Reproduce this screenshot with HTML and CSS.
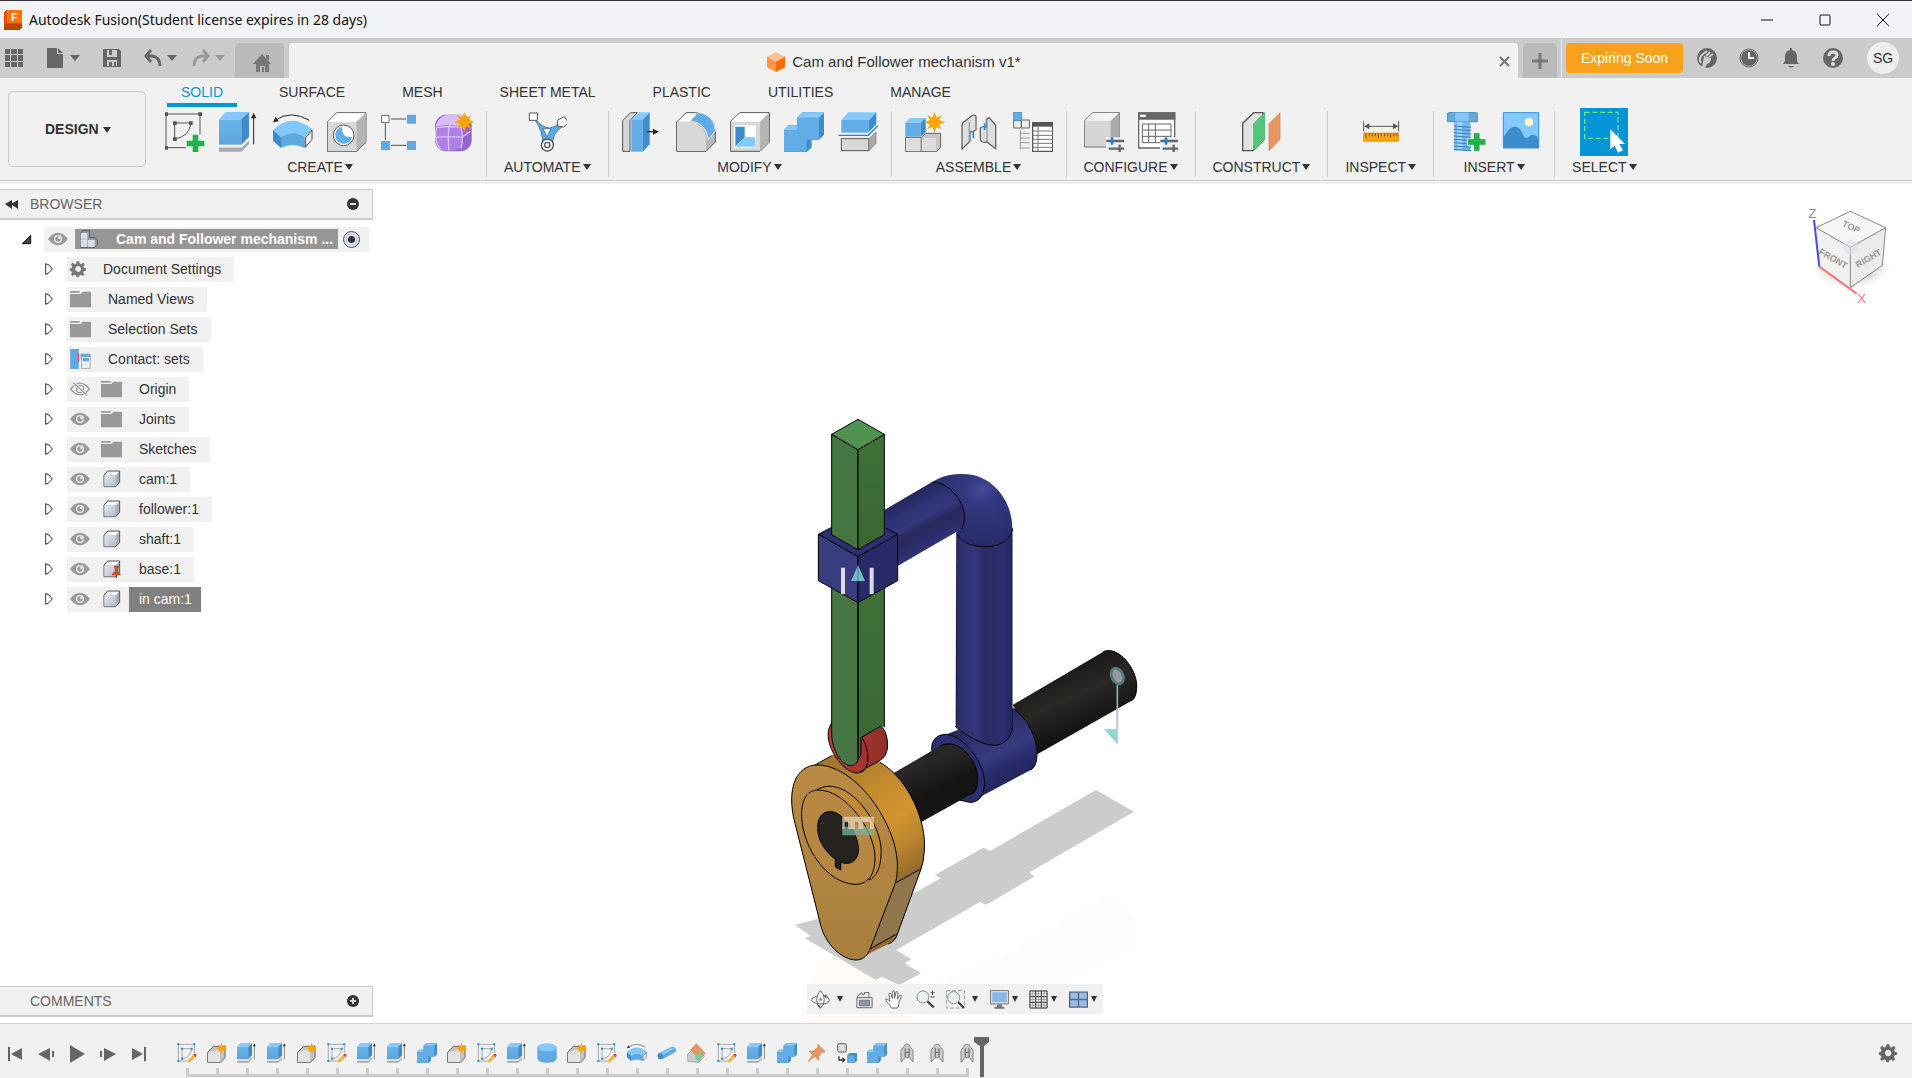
FILE: index.html
```html
<!DOCTYPE html>
<html lang="en">
<head>
    <meta charset="UTF-8">
    <meta name="viewport" content="width=device-width, initial-scale=1.0">
    <title>Autodesk Fusion</title>
    <link rel="stylesheet" href="styles.css">
</head>
<body>
    <!-- icon sprite -->
    <svg class="sprite" aria-hidden="true">
        <defs>
            <linearGradient id="blueFace" x1="0" y1="0" x2="0" y2="1"><stop offset="0" stop-color="#6ab3ea"/><stop offset="1" stop-color="#5da5dd"/></linearGradient>
            <linearGradient id="steel" x1="0" y1="0" x2="1" y2="1"><stop offset="0" stop-color="#e4e8f2"/><stop offset="1" stop-color="#b4bac8"/></linearGradient>
        </defs>
        <symbol id="star" viewBox="0 0 60 60"><path d="M30 0l6 17 15-9-8 15 17 7-17 6 8 15-15-8-6 17-7-17-15 8 8-15-16-6 16-7-8-15 15 9z" fill="#ffa500"/></symbol>
        <symbol id="sketch" viewBox="0 0 120 120">
            <path d="M105 68V6H3v101h60M29 81V33h48q-2 40-48 48z" fill="none" stroke="#555" stroke-width="3"/>
            <path d="M-2 1h11v11H-2zM100 1h11v11h-11zM-2 102h11v11H-2zM24 28h11v11H24zM72 28h11v11H72zM24 76h11v11H24z" fill="#555"/>
            <path d="M83 68h17v18h18v17h-18v18H83v-18H65V86h18z" fill="#22b14c"/>
        </symbol>
        <symbol id="extrude" viewBox="0 0 120 120">
            <path d="M0 105h67l23-23v14l-23 23H0z" fill="#aaa"/>
            <path d="M0 22h67v76H0z" fill="url(#blueFace)"/>
            <path d="M0 22L21 0h69L67 22z" fill="#84c8fc"/>
            <path d="M67 22L90 0v75L67 98z" fill="#3d8ccb"/>
            <path d="M0 104h67l23-22" fill="none" stroke="#f1f1f1" stroke-width="5"/>
            <path d="M104 97V14" stroke="#222" stroke-width="3"/><path d="M104 2l8 17H96z" fill="#222"/>
        </symbol>
        <symbol id="sweep" viewBox="0 0 120 120">
            <path d="M8 24Q55-7 109 25" fill="none" stroke="#222" stroke-width="3"/><path d="M0 31l8-17 9 14z" fill="#222"/>
            <path d="M0 54Q56 0 118 52L95 76Q60 50 24 76z" fill="#80c7fc"/>
            <path d="M0 54l24 22v32L0 86z" fill="#3d8ccb"/>
            <path d="M24 76q36-26 71 0v32q-36-18-71 0z" fill="#5da9e2"/>
            <path d="M97 78l20-24v28l-20 24z" fill="#fff" stroke="#444" stroke-width="3"/>
        </symbol>
        <symbol id="hole" viewBox="0 0 120 120">
            <path d="M1 30L29 2h88v88l-29 29H1z" fill="#d8d8d8" stroke="#666" stroke-width="3"/>
            <path d="M3 30L30 4h85L88 30z" fill="#fff"/><path d="M88 30l28-27v87l-28 28z" fill="#b5b5b5"/>
            <circle cx="50" cy="70" r="31" fill="#fff" stroke="#555" stroke-width="3"/>
            <path d="M44 44a26 26 0 1 0 32 31q-32 4-32-31z" fill="#63afe9"/>
        </symbol>
        <symbol id="pattern" viewBox="0 0 120 120">
            <path d="M30 21h46M13 34v50M30 100h46" stroke="#555" stroke-width="3"/>
            <path d="M2 10h22v22H2z" fill="#fff" stroke="#666" stroke-width="3"/>
            <path d="M78 8h27v27H78zM0 87h27v27H0zM78 87h27v27H78z" fill="#5faae3"/>
        </symbol>
        <symbol id="form" viewBox="0 0 120 120">
            <rect y="8" width="110" height="110" rx="34" fill="#9465cf"/>
            <path d="M2 44Q8 12 38 8h54q-2 22-18 34-40-5-72 2z" fill="#d9bdf7"/>
            <path d="M4 46q36-6 74 0 6 32-1 62-28 12-60 5Q-4 92 4 46z" fill="#ad80ea"/>
            <path d="M4 76q42-4 76 0l26-18M42 44q-4 36 0 72M42 44l20-34M4 46q40-5 74 0 8 34 0 64M78 46l24-20M4 46Q-4 92 17 111" fill="none" stroke="#dcc3f8" stroke-width="4"/>
            <use href="#star" x="58" width="60" height="60"/>
        </symbol>
        <symbol id="automate" viewBox="0 0 120 120">
            <path d="M22 20q25 28 46 28 18 0 30-18l8 14q-33 20-28 56H46Q52 62 22 20z" fill="#5faae3" stroke="#3f7cab" stroke-width="3"/>
            <path d="M48 50h24l-12 25z" fill="#fff" stroke="#3f7cab" stroke-width="3"/>
            <path d="M7 3h24v22H7zM92 24l20-10 12 18-14 13-18-3z" fill="#fff" stroke="#555" stroke-width="3"/>
            <circle cx="61" cy="99" r="18" fill="#fff" stroke="#555" stroke-width="4"/><circle cx="61" cy="99" r="8" fill="none" stroke="#555" stroke-width="4"/>
        </symbol>
        <symbol id="presspull" viewBox="0 0 120 120">
            <path d="M2 118V26L26 2h20L24 26v92z" fill="#d5d5d5" stroke="#555" stroke-width="3"/>
            <path d="M28 24L52 1h31L62 24z" fill="#84c8fc"/><path d="M28 24h34v95H28z" fill="#62ade6"/><path d="M62 24L83 1v96l-21 22z" fill="#3d8ccb"/>
            <path d="M74 59h24" stroke="#222" stroke-width="4"/><path d="M111 59L93 50v18z" fill="#222"/>
        </symbol>
        <symbol id="fillet" viewBox="0 0 120 120">
            <path d="M2 118V30L30 2h28q60 4 60 56v32l-28 28z" fill="#b9b9b9" stroke="#555" stroke-width="3"/>
            <path d="M3 30h40q46 8 47 54v33H3z" fill="#d8d8d8"/><path d="M4 29L31 4h30L42 29z" fill="#fff"/>
            <path d="M42 26L68 1q48 8 50 56L96 82Q92 34 42 26z" fill="#60aae5" stroke="#f1f1f1" stroke-width="3"/>
        </symbol>
        <symbol id="shell" viewBox="0 0 120 120">
            <path d="M1 30L29 2h89v88l-28 28H1z" fill="#d8d8d8" stroke="#555" stroke-width="3"/>
            <path d="M3 29L30 4h85L90 29z" fill="#fff"/><path d="M90 30l27-27v87l-27 27z" fill="#b5b5b5"/>
            <path d="M12 40h66v67H12z" fill="#fff"/><path d="M16 44h28v33L16 103z" fill="#3d8ccb"/><path d="M16 104l28-28h32v28z" fill="#84c8fc"/>
        </symbol>
        <symbol id="combine" viewBox="0 0 120 120">
            <path d="M0 54l13-14h26V17L55 1h66v66L105 83H83v23l-15 14H0z" fill="#3d8ccb"/>
            <path d="M0 54h39V17h66v66H68v36H0z" fill="#63ade7"/>
            <path d="M0 54l13-14h26v14zM39 17L55 1h66l-16 16z" fill="#84c8fc"/>
        </symbol>
        <symbol id="split" viewBox="0 0 120 120">
            <path d="M10 24L31 1h84L93 24z" fill="#84c8fc"/><path d="M10 24h83v38H10z" fill="#62ade6"/><path d="M93 24l22-23v36L93 62z" fill="#3d8ccb"/>
            <path d="M10 80h83v36H10z" fill="#d8d8d8" stroke="#555" stroke-width="3"/><path d="M93 80l21-20v34l-21 22z" fill="#aaa" stroke="#777" stroke-width="2"/>
            <path d="M0 70h91l29-29" fill="none" stroke="#f1f1f1" stroke-width="12"/><path d="M1 70h90l29-29" fill="none" stroke="#1088e0" stroke-width="4"/>
        </symbol>
        <symbol id="newcomp" viewBox="0 0 120 120">
            <path d="M1 76h48v43H1z" fill="#ddd" stroke="#666" stroke-width="3"/><path d="M49 76l13-12h45v42l-13 13H49z" fill="#c5c5c5" stroke="#666" stroke-width="3"/><path d="M50 78h43v39H50z" fill="#ddd"/>
            <path d="M1 32h46v42H1z" fill="#62ade6"/><path d="M1 32l14-14h47L47 32z" fill="#84c8fc"/><path d="M47 32l15-14v42L47 74z" fill="#3d8ccb"/>
            <use href="#star" x="58" width="62" height="62"/>
        </symbol>
        <symbol id="joint" viewBox="0 0 120 120">
            <path d="M9 38q2-8 12-13l16-13q10-6 14 2v40q-10 6-18 6v28L9 111zM82 22l8-5 20 22v71L84 90q-18 4-20-8V48q8-7 18-2z" fill="#ddd" stroke="#666" stroke-width="4"/>
            <path d="M31 30v56M51 18v36M84 22v66" stroke="#999" stroke-width="4"/>
            <path d="M43 58v20M77 34v20" stroke="#1b8de0" stroke-width="5"/>
        </symbol>
        <symbol id="assemblytable" viewBox="0 0 120 120">
            <path d="M2 24h23v24H2zM25 24h24v24H25z" fill="#eee" stroke="#666" stroke-width="3"/><path d="M1 1h25v25H1z" fill="#62ade6" stroke="#3f7cab" stroke-width="2"/>
            <path d="M22 53v60M22 64h28M22 78h28M22 92h28M22 108h28" stroke="#999" stroke-width="3"/>
            <path d="M59 32h60v86H59z" fill="#fff" stroke="#555" stroke-width="4"/><path d="M58 30h63v14H58z" fill="#555"/>
            <path d="M59 57h60M59 70h60M59 82h60M59 94h60M59 106h60M75 45v73" stroke="#777" stroke-width="3"/>
        </symbol>
        <symbol id="configure" viewBox="0 0 120 120">
            <path d="M1 27L27 1h79v78l-26 26H1z" fill="#d6d6d6" stroke="#777" stroke-width="3"/><path d="M3 26L28 3h76L80 26z" fill="#f2f2f2"/><path d="M80 27l26-25v77l-26 25z" fill="#aaa"/>
            <use href="#sliders"/>
        </symbol>
        <symbol id="sliders" viewBox="0 0 120 120">
            <path d="M66 76h54v44H66z" fill="#f1f1f1"/><path d="M67 87h53M74 110h46" stroke="#666" stroke-width="7"/><path d="M84 76v22" stroke="#1088e0" stroke-width="8"/><path d="M107 98v22" stroke="#666" stroke-width="7"/>
        </symbol>
        <symbol id="configtable" viewBox="0 0 120 120">
            <path d="M2 3h108v105H2z" fill="#fff" stroke="#666" stroke-width="4"/><path d="M1 1h111v22H1z" fill="#666"/><path d="M6 8h18v7H6z" fill="#fff"/>
            <path d="M13 36h86v56H13zM13 54h86M13 73h86M32 36v56M52 36v56" fill="none" stroke="#666" stroke-width="3"/><use href="#sliders"/>
        </symbol>
        <symbol id="construct" viewBox="0 0 120 120">
            <path d="M5 34L38 2h28v84l-30 30H5z" fill="#e2e2e2" stroke="#555" stroke-width="4"/>
            <path d="M38 35L71 2v80l-33 34z" fill="#55c57c" stroke="#35a65d" stroke-width="2"/><path d="M84 35l33-33v80l-33 34z" fill="#e9955f" stroke="#cf7b45" stroke-width="2"/>
        </symbol>
        <symbol id="measure" viewBox="0 0 120 120">
            <path d="M8 28v30M113 28v30M12 43h97" stroke="#555" stroke-width="3"/><path d="M9 43l16-9v18zM112 43l-16-9v18z" fill="#555"/>
            <path d="M8 63h105v25H8z" fill="#ffa500" stroke="#c98a10" stroke-width="2"/><path d="M15 64v13M25 64v9M34 64v9M43 64v9M52 64v13M61 64v9M71 64v9M80 64v9M89 64v13M99 64v9M108 64v9" stroke="#555" stroke-width="3"/>
        </symbol>
        <symbol id="bolt" viewBox="0 0 120 120">
            <path d="M1 4L12 0h70l9 4v25H1z" fill="#63a9dc" stroke="#2d74a8" stroke-width="2"/><path d="M25 2h40v26H25z" fill="#84c8fc"/><path d="M22 30h48v86H22z" fill="#72b8ee"/>
            <path d="M30 30h16v86H30z" fill="#9ad2fc"/><path d="M20 42l52 4M20 52l52 4M20 62l52 4M20 72l52 4M20 82l52 4M20 92l52 4M20 102l52 4M20 112l52 4" stroke="#3a80b3" stroke-width="3"/>
            <path d="M79 62h20v18h18v20H99v18H79v-18H61V80h18z" fill="#22b14c" stroke="#f1f1f1" stroke-width="3"/>
        </symbol>
        <symbol id="picture" viewBox="0 0 120 120">
            <path d="M7 2h106v106H7z" fill="#82c9fd" stroke="#3d8ccb" stroke-width="3"/><path d="M8 75Q40 20 64 62q8 22 18 14 16-18 31 4v28H8z" fill="#3d8ccb"/><circle cx="84" cy="30" r="13" fill="#fffbd0"/>
        </symbol>
        <symbol id="select" viewBox="0 0 144 144">
            <path d="M14 13h100v78H14z" fill="none" stroke="#6be38c" stroke-width="4" stroke-dasharray="15 8"/><path d="M91 64v60l13-11 10 21 15-7-11-19h17z" fill="#fff"/>
        </symbol>
        <!-- timeline icons -->
        <symbol id="t-sketch" viewBox="0 0 60 60">
            <path d="M52 30V4H4v50h30M15 48V17h29q-2 26-29 31z" fill="none" stroke="#888" stroke-width="2"/>
            <path d="M1 1h6v6H1zM49 1h6v6h-6zM1 51h6v6H1zM12 14h6v6h-6zM41 14h6v6h-6zM12 44h6v6h-6z" fill="#1b8de8"/>
            <path d="M34 50l14-14 7 7-15 14-8 2z" fill="#f2b43c"/><path d="M48 36l4-4q7-1 7 6l-4 5z" fill="#f03a4e"/>
        </symbol>
        <symbol id="t-body" viewBox="0 0 60 60">
            <path d="M2 58V28L20 10h34v34L40 58z" fill="#c4c4c4" stroke="#666" stroke-width="3"/><path d="M3 57V30l17-8h16l3 8v27z" fill="#e2e2e2"/><use href="#star" x="28" width="32" height="32"/>
        </symbol>
        <symbol id="t-cylinder" viewBox="0 0 60 60"><path d="M1 13v34q4 12 29 12t29-12V13z" fill="#5faae3"/><ellipse cx="30" cy="13" rx="29" ry="12" fill="#84c8fc"/></symbol>
        <symbol id="t-pipe" viewBox="0 0 60 60"><path d="M6 30L44 11q14-1 13 12-1 4-5 6L16 49Q2 48 2 36q1-4 4-6z" fill="#5faae3"/><path d="M10 31l34-18 8 4-34 18z" fill="#84c8fc"/><ellipse cx="10" cy="40" rx="8" ry="9" fill="#3d8ccb"/></symbol>
        <symbol id="t-plane" viewBox="0 0 60 60"><path d="M2 56V34L20 16h14l18 24-16 18z" fill="#ccc" stroke="#999" stroke-width="2"/><path d="M10 20L28 1l28 30-19 19z" fill="#e29662"/><path d="M23 44l20-22v28l-7 8z" fill="#7bcf94"/></symbol>
        <symbol id="t-pin" viewBox="0 0 60 60"><path d="M32 4l23 22-10 2-10 12v12L23 40 3 57l14-22L6 25l14-1 13-11z" fill="#e29662" stroke="#c97d48" stroke-width="2"/></symbol>
        <symbol id="t-move" viewBox="0 0 60 60"><rect x="2" y="2" width="26" height="25" rx="5" fill="#ddd" stroke="#555" stroke-width="3"/><path d="M31 37l7-7h22v22l-7 7H31z" fill="#3d8ccb"/><path d="M31 37h22v22H31z" fill="#63ade7"/><path d="M6 40v11h10" fill="none" stroke="#333" stroke-width="4"/><path d="M16 43l10 8-10 8z" fill="#333"/></symbol>
        <symbol id="t-joint" viewBox="0 0 60 60"><path d="M12 57V22L26 4h8l14 18v35L37 44H24z" fill="#ccc" stroke="#888" stroke-width="3"/><path d="M25 16v26M36 16v26M25 28h11" stroke="#777" stroke-width="4"/></symbol>
        <!-- browser icons -->
        <symbol id="eye" viewBox="0 0 60 40"><path d="M0 20Q30-18 60 20 30 58 0 20z" fill="#999"/><circle cx="30" cy="20" r="12" fill="#f1f1f1"/><circle cx="30" cy="20" r="8" fill="#999"/><circle cx="33" cy="17" r="3" fill="#fff"/></symbol>
        <symbol id="eyeoff" viewBox="0 0 60 40"><path d="M2 20Q30-15 58 20 30 55 2 20z" fill="none" stroke="#999" stroke-width="4"/><circle cx="30" cy="20" r="11" fill="none" stroke="#999" stroke-width="4"/><path d="M10 1l41 38" stroke="#f1f1f1" stroke-width="8"/><path d="M10 1l41 38" stroke="#999" stroke-width="4"/></symbol>
        <symbol id="folder" viewBox="0 0 63 50"><path d="M0 1h29v5H0zM0 10h31l7-7h25v47H0z" fill="#999"/></symbol>
        <symbol id="cube" viewBox="0 0 54 54"><path d="M3 15L14 3h36v33L38 50H3z" fill="#aab0bf" stroke="#555" stroke-width="3"/><path d="M5 16L15 5h33L38 16z" fill="#fff"/><path d="M4 16h34v33H4z" fill="url(#steel)"/></symbol>
        <symbol id="groundcube" viewBox="0 0 54 54"><use href="#cube"/><path d="M33 17h15v5l-3 3v9l8 8v4H27v-4l8-8v-9l-2-3z" fill="#c4532a"/><path d="M40 46v8" stroke="#333" stroke-width="3"/></symbol>
        <symbol id="assembly" viewBox="0 0 54 54"><path d="M1 9l8-7h20v21h16l7 7v15l-8 7H1z" fill="#969eae" stroke="#444" stroke-width="2"/><path d="M2 9h20v17H2zM2 28h20v23H2zM24 30h20v21H24z" fill="#d9deea"/></symbol>
        <symbol id="contact" viewBox="0 0 62 60"><path d="M0 0h26v60H0z" fill="#5faae3"/><path d="M25 12v26" stroke="#f03a4e" stroke-width="3"/><path d="M31 14h30v12H31z" fill="#5faae3"/><path d="M34 23h26v36H34z" fill="#eee" stroke="#888" stroke-width="2"/><path d="M38 27h18v10H38z" fill="#5faae3"/></symbol>
        <symbol id="gear" viewBox="0 0 50 50"><path d="M21 1h8l1 7 5 2 6-5 5 6-4 6 2 5 6 1v7l-6 1-3 5 4 6-5 5-6-4-5 2-1 6h-8l-1-6-5-2-6 4-5-5 4-6-3-5-5-1v-7l6-1 2-5-4-6 5-6 6 5 5-2zM25 16a9 9 0 1 0 1 0z" fill="currentColor" fill-rule="evenodd"/></symbol>
        <symbol id="expand" viewBox="0 0 24 36"><path d="M2 2v32L12 29 22 18 12 6z" fill="#fff" stroke="#333" stroke-width="3"/></symbol>
    </svg>

    <header class="titlebar">
        <svg class="app-logo" viewBox="0 0 54 60" aria-hidden="true"><path d="M0 8L8 0h46v52l-7 8H0z" fill="#b84500"/><path d="M9 0h45v40H9z" fill="#ff7409"/><path d="M0 8l9-8v40l-9 4z" fill="#e65100"/><text x="31" y="32" class="logo-letter">F</text></svg>
        <h1>Autodesk Fusion(Student license expires in 28 days)</h1>
        <button class="win-button" aria-label="Minimize"><svg viewBox="0 0 12 12"><path d="M0 6h12"/></svg></button>
        <button class="win-button" aria-label="Maximize"><svg viewBox="0 0 12 12"><rect x="1" y="1" width="10" height="10" rx="1"/></svg></button>
        <button class="win-button" aria-label="Close"><svg viewBox="0 0 12 12"><path d="M0 0l12 12M12 0L0 12"/></svg></button>
    </header>

    <div class="quickbar">
        <div class="quick-tools">
            <button class="tool" aria-label="Data panel"><svg class="i18" viewBox="0 0 18 18"><path d="M0 0h5v5H0zM6 0h6v5H6zM13 0h5v5h-5zM0 6h5v6H0zM6 6h6v6H6zM13 6h5v6h-5zM0 13h5v5H0zM6 13h6v5H6zM13 13h5v5h-5z" fill="#666"/></svg></button>
            <button class="tool file" aria-label="File"><svg class="i20" viewBox="0 0 20 20"><path d="M2 0h10v6h6v14H2zM13 0l5 5h-5z" fill="#666"/></svg><span class="caret"></span></button>
            <button class="tool save" aria-label="Save"><svg class="i18" viewBox="0 0 18 18"><path d="M0 0h16l2 2v16H0z" fill="#666"/><path d="M4 1h10v7H4zM4 11h10v6H4z" fill="#ccc"/><path d="M6 1h3v5H6zM6 13h3v4H6zM11 13h2v4h-2z" fill="#666"/></svg></button>
            <button class="tool undo" aria-label="Undo"><svg class="i18" viewBox="0 0 18 18"><path d="M7 1L2 7l5 6M3 7h5q8 1 8 10" fill="none" stroke="#666" stroke-width="3"/></svg><span class="caret"></span></button>
            <button class="tool redo" aria-label="Redo"><svg class="i18" viewBox="0 0 18 18"><path d="M11 1l5 6-5 6M15 7h-5q-8 1-8 10" fill="none" stroke="#999" stroke-width="3"/></svg><span class="caret"></span></button>
        </div>
        <button class="home-tab" aria-label="Home"><svg class="i18" viewBox="0 0 18 18"><path d="M9 0l9 10h-2v8h-4v-6H7v6H3v-8H0zM13 1h3v6l-3-3z" fill="#777"/><path d="M9 13h2v5H9z" fill="#777"/></svg></button>
        <div class="doc-tab">
            <span class="doc-title"><svg class="doc-icon" viewBox="0 0 54 60"><path d="M27 0l27 14-27 15L0 14z" fill="#ffc29a"/><path d="M0 14l27 15v31L0 46z" fill="#ff9442"/><path d="M54 14L27 29v31l27-14z" fill="#ff6a00"/></svg>Cam and Follower mechanism v1*</span>
            <button class="tool" aria-label="Close tab"><svg class="i11" viewBox="0 0 11 11"><path d="M1 1l9 9M10 1l-9 9" stroke="#777" stroke-width="2"/></svg></button>
        </div>
        <button class="new-tab" aria-label="New tab"><svg class="i16" viewBox="0 0 16 16"><path d="M8 0v16M0 8h16" stroke="#777" stroke-width="3"/></svg></button>
        <div class="account">
            <button class="expiring">Expiring Soon</button>
            <button class="tool" aria-label="Extensions"><svg class="i20" viewBox="0 0 20 20"><circle cx="10" cy="10" r="10" fill="#666"/><path d="M4 15Q1 10 6 6l4-3M9 8l4-4M12 9l4-3" fill="none" stroke="#ccc" stroke-width="2"/><path d="M7 8l7 2q0 5-4 6l-2 4H5l1-6z" fill="#ccc"/></svg></button>
            <button class="tool" aria-label="Job status"><svg class="i20" viewBox="0 0 20 20"><circle cx="10" cy="10" r="9" fill="#ddd" stroke="#666" stroke-width="1"/><circle cx="10" cy="10" r="8" fill="#666"/><path d="M10 4v6h5" fill="none" stroke="#eee" stroke-width="2"/></svg></button>
            <button class="tool" aria-label="Notifications"><svg class="i20" viewBox="0 0 20 20"><path d="M9 0h2v2q5 1 5 7v4l2 3H2l2-3V9q0-6 5-7zM7 18h6q-3 3-6 0z" fill="#666"/></svg></button>
            <button class="tool" aria-label="Help"><svg class="i20" viewBox="0 0 20 20"><circle cx="10" cy="10" r="10" fill="#666"/><path d="M6 8q0-4 4-4t4 3q0 2-2 3t-2 3" fill="none" stroke="#ddd" stroke-width="3"/><circle cx="10" cy="16" r="2" fill="#ddd"/></svg></button>
            <button class="avatar">SG</button>
        </div>
    </div>

    <div class="ribbon">
        <div class="workspace">
            <select aria-label="Workspace"><option>DESIGN</option></select>
            <span class="caret"></span>
        </div>
        <div class="ribbon-main">
            <nav class="tabs">
                <a href="#" class="active">SOLID</a>
                <a href="#">SURFACE</a>
                <a href="#">MESH</a>
                <a href="#">SHEET METAL</a>
                <a href="#">PLASTIC</a>
                <a href="#">UTILITIES</a>
                <a href="#">MANAGE</a>
            </nav>
            <div class="groups">
                <section class="group">
                    <div class="icons">
                        <button aria-label="Create Sketch"><svg><use href="#sketch"/></svg></button>
                        <button aria-label="Extrude"><svg><use href="#extrude"/></svg></button>
                        <button aria-label="Sweep"><svg><use href="#sweep"/></svg></button>
                        <button aria-label="Hole"><svg><use href="#hole"/></svg></button>
                        <button aria-label="Pattern"><svg><use href="#pattern"/></svg></button>
                        <button aria-label="Create Form"><svg><use href="#form"/></svg></button>
                    </div>
                    <button class="group-label">CREATE<span class="caret"></span></button>
                </section>
                <section class="group">
                    <div class="icons"><button aria-label="Automated Modeling"><svg><use href="#automate"/></svg></button></div>
                    <button class="group-label">AUTOMATE<span class="caret"></span></button>
                </section>
                <section class="group">
                    <div class="icons">
                        <button aria-label="Press Pull"><svg><use href="#presspull"/></svg></button>
                        <button aria-label="Fillet"><svg><use href="#fillet"/></svg></button>
                        <button aria-label="Shell"><svg><use href="#shell"/></svg></button>
                        <button aria-label="Combine"><svg><use href="#combine"/></svg></button>
                        <button aria-label="Split Body"><svg><use href="#split"/></svg></button>
                    </div>
                    <button class="group-label">MODIFY<span class="caret"></span></button>
                </section>
                <section class="group">
                    <div class="icons">
                        <button aria-label="New Component"><svg><use href="#newcomp"/></svg></button>
                        <button aria-label="Joint"><svg><use href="#joint"/></svg></button>
                        <button aria-label="Bill of Materials"><svg><use href="#assemblytable"/></svg></button>
                    </div>
                    <button class="group-label">ASSEMBLE<span class="caret"></span></button>
                </section>
                <section class="group">
                    <div class="icons">
                        <button aria-label="Configure"><svg><use href="#configure"/></svg></button>
                        <button aria-label="Configuration Table"><svg><use href="#configtable"/></svg></button>
                    </div>
                    <button class="group-label">CONFIGURE<span class="caret"></span></button>
                </section>
                <section class="group">
                    <div class="icons"><button aria-label="Offset Plane"><svg><use href="#construct"/></svg></button></div>
                    <button class="group-label">CONSTRUCT<span class="caret"></span></button>
                </section>
                <section class="group">
                    <div class="icons"><button aria-label="Measure"><svg><use href="#measure"/></svg></button></div>
                    <button class="group-label">INSPECT<span class="caret"></span></button>
                </section>
                <section class="group">
                    <div class="icons">
                        <button aria-label="Insert Fastener"><svg><use href="#bolt"/></svg></button>
                        <button aria-label="Insert Canvas"><svg><use href="#picture"/></svg></button>
                    </div>
                    <button class="group-label">INSERT<span class="caret"></span></button>
                </section>
                <section class="group">
                    <div class="icons"><button class="selected" aria-label="Select"><svg><use href="#select"/></svg></button></div>
                    <button class="group-label">SELECT<span class="caret"></span></button>
                </section>
            </div>
        </div>
    </div>

    <main class="canvas">
        <svg class="model" viewBox="-42 0 1200 1869" role="img" aria-label="Cam and follower mechanism">
            <defs>
                <linearGradient id="pipe" x1="0" x2="1"><stop offset="0" stop-color="#27285f"/><stop offset=".1" stop-color="#2f3173"/><stop offset=".35" stop-color="#34367a"/><stop offset=".5" stop-color="#292b63"/><stop offset=".85" stop-color="#2c2e70"/><stop offset="1" stop-color="#22245a"/></linearGradient>
                <linearGradient id="arm" gradientUnits="userSpaceOnUse" x1="420" y1="280" x2="500" y2="430"><stop offset="0" stop-color="#23265c"/><stop offset=".3" stop-color="#2f3275"/><stop offset=".5" stop-color="#35377c"/><stop offset=".65" stop-color="#26285d"/><stop offset="1" stop-color="#303277"/></linearGradient>
                <radialGradient id="elbow" cx=".62" cy=".22" r=".8"><stop offset="0" stop-color="#484c98"/><stop offset=".25" stop-color="#343880"/><stop offset="1" stop-color="#282a68"/></radialGradient>
                <linearGradient id="collar" gradientUnits="userSpaceOnUse" x1="630" y1="980" x2="710" y2="1150"><stop offset="0" stop-color="#292b65"/><stop offset=".5" stop-color="#383b80"/><stop offset=".75" stop-color="#282a6c"/><stop offset="1" stop-color="#25275e"/></linearGradient>
                <linearGradient id="shaft" gradientUnits="userSpaceOnUse" x1="870" y1="820" x2="940" y2="980"><stop offset="0" stop-color="#1b1a18"/><stop offset=".45" stop-color="#2a2926"/><stop offset="1" stop-color="#151412"/></linearGradient>
                <linearGradient id="camSide" gradientUnits="userSpaceOnUse" x1="190" y1="1080" x2="430" y2="1420"><stop offset="0" stop-color="#a1762f"/><stop offset=".35" stop-color="#c48a2d"/><stop offset=".6" stop-color="#d1942f"/><stop offset=".8" stop-color="#b98330"/><stop offset="1" stop-color="#936a2b"/></linearGradient>
                <linearGradient id="camFace" x1="0" y1="0" x2="0" y2="1"><stop offset="0" stop-color="#b98b43"/><stop offset="1" stop-color="#a97f3e"/></linearGradient>
                <linearGradient id="greenSide" x1="0" y1="0" x2="0" y2="1"><stop offset="0" stop-color="#3e7138"/><stop offset="1" stop-color="#3a6733"/></linearGradient>
                <linearGradient id="red" x1="0" x2="1"><stop offset="0" stop-color="#c03f38"/><stop offset="1" stop-color="#8f2d27"/></linearGradient>
            </defs>
            <!-- floor shadow and reflection -->
            <path d="M480 1760L720 1660 1000 1492C1050 1480 1105 1540 1100 1600Q1096 1640 1060 1650L850 1755z" fill="#fcfcfd"/>
            <path d="M90 1869Q130 1680 190 1640L330 1660Q410 1690 430 1760V1869z" fill="#fffbf8"/>
            <path d="M75 1575L440 1475 512 1435 495 1425 640 1343 660 1353 978 1170 1092 1235 778 1417 793 1430 648 1514 630 1506 378 1650 424 1678 403 1690 453 1720 388 1755 335 1730 318 1740 105 1615 122 1608z" fill="#ccc"/>
            <!-- rear shaft -->
            <path d="M728 915L1000 755C1045 735 1105 810 1100 865Q1098 895 1085 902L803 1062z" fill="url(#shaft)"/>
            <path class="edge" d="M1000 755C1045 735 1105 810 1100 865Q1098 895 1085 902"/>
            <!-- base: collar, post, elbow and arm -->
            <path d="M530 1003L728 925C770 950 808 1020 800 1075Q798 1100 782 1110L600 1207 568 1200z" fill="url(#collar)"/>
            <path class="edge" d="M728 925C770 950 808 1020 800 1075Q798 1100 782 1110"/>
            <path class="edge" d="M485 1050C483 1020 500 1003 530 1003 590 1010 650 1100 643 1160 640 1190 625 1207 600 1207L568 1200z" fill="#2b2e70"/>
            <path d="M559 390H727V980C722 1015 700 1036 670 1036 630 1034 590 1008 557 980z" fill="url(#pipe)"/>
            <path class="edge" d="M556 980C590 1008 640 1035 670 1036 700 1036 725 1015 728 978"/>
            <path class="edge thin" d="M559 400V980M727 385V980"/>
            <path d="M343 330L485 247 540 240 600 330 600 390 560 395 384 497H343z" fill="url(#arm)"/>
            <path d="M485 247C520 226 545 222 580 222 665 222 727 300 727 385 718 420 690 440 645 440 620 440 580 430 560 400Q588 385 583 355C590 315 535 240 485 247z" fill="url(#elbow)"/>
            <path class="edge" d="M485 247C535 240 590 315 583 355Q582 378 575 388M560 400C575 430 610 440 645 440 690 440 722 420 728 385"/>
            <!-- front shaft -->
            <path d="M370 1120L510 1038C565 1010 625 1080 623 1140Q622 1175 605 1182L450 1268z" fill="url(#shaft)"/>
            <path class="edge" d="M510 1038C565 1010 625 1080 623 1140Q622 1175 605 1182"/>
            <!-- cam -->
            <path d="M135 1095L200 1058 330 1087C420 1140 470 1270 463 1350Q462 1385 452 1410L383 1600Q376 1625 355 1632L258 1680 100 1200z" fill="url(#camSide)"/>
            <path d="M378 1448L452 1407 380 1600 303 1643z" fill="#8f764b"/>
            <path class="edge" d="M330 1087C420 1140 470 1270 463 1350Q462 1385 452 1410L383 1600Q376 1625 355 1632M378 1448l74-41M303 1645l77-43M135 1095l50-28"/>
            <path class="edge" d="M65 1200C65 1140 90 1100 135 1095 260 1090 385 1280 382 1400 382 1430 378 1445 372 1460L303 1640C295 1665 280 1680 258 1680 215 1680 165 1630 152 1575L75 1270C68 1245 65 1220 65 1200z" fill="url(#camFace)"/>
            <path class="edge" d="M140 1170C165 1155 185 1158 200 1162 270 1180 340 1290 333 1365 331 1405 320 1428 298 1440z" fill="#c08a35"/>
            <path class="edge" d="M95 1250C93 1200 110 1170 145 1170 230 1170 320 1300 315 1380 313 1430 290 1453 255 1453 170 1450 97 1340 95 1250z" fill="#b68741"/>
            <path class="edge" d="M143 1285C143 1250 158 1233 185 1235 225 1240 270 1310 265 1355 262 1380 245 1392 225 1390L212 1387V1410L196 1401V1378C165 1355 143 1320 143 1285z" fill="#242320"/>
            <!-- roller -->
            <path class="edge" d="M180 978C168 1000 175 1040 200 1075 225 1110 250 1122 268 1118L292 1102 330 1082Q350 1068 352 1048C355 1010 345 990 333 978L275 1012V960H190z" fill="url(#red)"/>
            <path class="edge" d="M275 1012C292 1035 300 1080 288 1103Q282 1117 265 1118"/>
            <!-- follower below the guide -->
            <path d="M264 560H343V978L275 1012 268 1078 264 1085z" fill="url(#greenSide)"/>
            <path class="edge" d="M343 560V982M275 1012L333 978"/>
            <path class="edge" d="M185 560V1000C185 1050 215 1097 243 1097Q260 1095 264 1080V560z" fill="#467643"/>
            <path class="edge" d="M264 560V1070M273 1012V1065L262 1080"/>
            <!-- guide block -->
            <path class="edge" d="M145 403L264 340 383 403 264 470z" fill="#2c2f72"/>
            <path class="edge" d="M145 403L264 470V608L145 542z" fill="#3a3c80"/>
            <path class="edge" d="M264 470L383 403V542L264 608z" fill="#292b69"/>
            <!-- follower above the guide -->
            <path class="edge" d="M185 103L264 149V449L185 404z" fill="#447742"/>
            <path class="edge" d="M264 149L343 103V404L264 449z" fill="url(#greenSide)"/>
            <path class="edge" d="M185 103L264 58 343 103 264 149z" fill="#529250"/>
            <!-- joint glyphs -->
            <path d="M213 503h12v79h-12zM299 503h12v79h-12z" fill="#dcd9e8"/><path d="M264 496l21 47h-42z" fill="#73bcc5"/><path d="M264 496v47" stroke="#427e88" stroke-width="3"/>
            <ellipse cx="1042" cy="828" rx="17" ry="25" transform="rotate(-25 1042 828)" fill="#999" stroke="#487f80" stroke-width="8"/>
            <path d="M1042 855V1030" stroke="#8faeac" stroke-width="5"/><path d="M1042 930V1030" stroke="#c4d2d1" stroke-width="5"/><path d="M1002 988h39v43z" fill="#92d5d1"/>
            <path d="M217 1280h95v26h-95z" fill="#7bae9d" opacity=".75"/><path d="M217 1250h95v37h-12v-21h-20v21h-15v-21h-10v21h-21v-21h-10v21h-7z" fill="#e5d5bd" opacity=".75"/>
        </svg>

        <aside class="browser">
            <div class="panel-head">
                <button class="tool collapse" aria-label="Collapse browser"><svg viewBox="0 0 13 9"><path d="M7 0v9L0 4zM13 0v9L6 4z" fill="#333"/></svg></button>
                <h2>BROWSER</h2>
                <button class="tool" aria-label="Hide browser"><svg class="i12" viewBox="0 0 12 12"><circle cx="6" cy="6" r="6" fill="#333"/><path d="M3 6h6" stroke="#ddd" stroke-width="2"/></svg></button>
            </div>
            <ul class="tree">
                <li class="root"><button class="toggle" aria-label="Collapse"><svg viewBox="0 0 27 27"><path d="M26 1v25H1z" fill="#444" stroke="#111" stroke-width="3"/></svg></button><span class="chip"><svg class="eye"><use href="#eye"/></svg><span class="root-name"><svg class="cube"><use href="#assembly"/></svg><b>Cam and Follower mechanism ...</b></span><input type="radio" name="active-component" aria-label="Activate component" checked></span></li>
                <li><button class="toggle" aria-label="Expand"><svg><use href="#expand"/></svg></button><span class="chip"><svg class="gear"><use href="#gear"/></svg><span class="name">Document Settings</span></span></li>
                <li><button class="toggle" aria-label="Expand"><svg><use href="#expand"/></svg></button><span class="chip"><svg class="folder"><use href="#folder"/></svg><span class="name">Named Views</span></span></li>
                <li><button class="toggle" aria-label="Expand"><svg><use href="#expand"/></svg></button><span class="chip"><svg class="folder"><use href="#folder"/></svg><span class="name">Selection Sets</span></span></li>
                <li><button class="toggle" aria-label="Expand"><svg><use href="#expand"/></svg></button><span class="chip"><svg class="folder"><use href="#contact"/></svg><span class="name">Contact: sets</span></span></li>
                <li><button class="toggle" aria-label="Expand"><svg><use href="#expand"/></svg></button><span class="chip"><svg class="eye"><use href="#eyeoff"/></svg><svg class="folder"><use href="#folder"/></svg><span class="name">Origin</span></span></li>
                <li><button class="toggle" aria-label="Expand"><svg><use href="#expand"/></svg></button><span class="chip"><svg class="eye"><use href="#eye"/></svg><svg class="folder"><use href="#folder"/></svg><span class="name">Joints</span></span></li>
                <li><button class="toggle" aria-label="Expand"><svg><use href="#expand"/></svg></button><span class="chip"><svg class="eye"><use href="#eye"/></svg><svg class="folder"><use href="#folder"/></svg><span class="name">Sketches</span></span></li>
                <li><button class="toggle" aria-label="Expand"><svg><use href="#expand"/></svg></button><span class="chip"><svg class="eye"><use href="#eye"/></svg><svg class="cube"><use href="#cube"/></svg><span class="name">cam:1</span></span></li>
                <li><button class="toggle" aria-label="Expand"><svg><use href="#expand"/></svg></button><span class="chip"><svg class="eye"><use href="#eye"/></svg><svg class="cube"><use href="#cube"/></svg><span class="name">follower:1</span></span></li>
                <li><button class="toggle" aria-label="Expand"><svg><use href="#expand"/></svg></button><span class="chip"><svg class="eye"><use href="#eye"/></svg><svg class="cube"><use href="#cube"/></svg><span class="name">shaft:1</span></span></li>
                <li><button class="toggle" aria-label="Expand"><svg><use href="#expand"/></svg></button><span class="chip"><svg class="eye"><use href="#eye"/></svg><svg class="cube"><use href="#groundcube"/></svg><span class="name">base:1</span></span></li>
                <li><button class="toggle" aria-label="Expand"><svg><use href="#expand"/></svg></button><span class="chip"><svg class="eye"><use href="#eye"/></svg><svg class="cube"><use href="#cube"/></svg><span class="name picked">in cam:1</span></span></li>
            </ul>
        </aside>

        <svg class="viewcube" viewBox="0 0 396 390" role="img" aria-label="View cube">
            <defs><radialGradient id="cubeShadow"><stop offset=".4" stop-color="#999" stop-opacity=".6"/><stop offset="1" stop-color="#fff" stop-opacity="0"/></radialGradient></defs>
            <ellipse cx="215" cy="238" rx="125" ry="62" fill="url(#cubeShadow)"/>
            <path d="M108 113L211 64 317 113 211 172z" fill="#f6f6f6"/><path d="M108 113L211 172V293L118 230z" fill="#f0f0f0"/><path d="M317 113L211 172V293L307 226z" fill="#ebebeb"/>
            <path d="M108 113L211 64 317 113 211 172zM211 172V293L307 226 317 113" fill="none" stroke="#888" stroke-width="3"/>
            <path d="M190 160l21-12 22 12v24l-22 12-21-12z" fill="#dde0e8" opacity=".6"/>
            <path d="M102 90L118 230" stroke="#4a4ae8" stroke-width="6"/><path d="M118 230L230 311" stroke="#f07878" stroke-width="6"/>
            <g class="cube-text"><text x="213" y="120" transform="rotate(26 213 112)">TOP</text><text x="160" y="215" transform="rotate(30 160 205)">FRONT</text><text x="265" y="214" transform="rotate(-30 265 204)">RIGHT</text></g>
            <text class="axis-z" x="97" y="84">Z</text><text class="axis-x" x="245" y="338">X</text>
        </svg>

        <div class="comments panel-head">
            <h2>COMMENTS</h2>
            <button class="tool" aria-label="Show comments"><svg class="i12" viewBox="0 0 12 12"><circle cx="6" cy="6" r="6" fill="#333"/><path d="M3 6h6M6 3v6" stroke="#ddd" stroke-width="2"/></svg></button>
        </div>

        <div class="navbar">
            <button class="wide" aria-label="Orbit"><svg viewBox="0 0 60 60"><path d="M30 2q12 10 12 28T30 58Q18 48 18 30T30 2zM18 20Q2 24 2 32t26 12q30 1 30-12 0-8-16-12" fill="none" stroke="#666" stroke-width="3"/><circle cx="30" cy="30" r="4" fill="#1b8de8"/><path d="M20 50l10 8-4-12zM40 18l10-4-2 10z" fill="#444"/></svg><span class="caret"></span></button>
            <button aria-label="Look At"><svg viewBox="0 0 60 60"><path d="M6 22L22 8v6h8V8h14v14M6 24h48v32H6z" fill="#eee" stroke="#666" stroke-width="3"/><path d="M14 32h32v18H14z" fill="#8f97a8" stroke="#555" stroke-width="2"/></svg></button>
            <button aria-label="Pan"><svg viewBox="0 0 60 60"><path d="M20 57q-2-9-10-14L1 30q3-5 9 1l6 5L12 12q4-5 7 1l4 14V4q4-5 7 0v22l5-20q5-3 6 2l-2 21 8-13q6-1 4 6-8 17-8 23 0 8-4 12z" fill="#fff" stroke="#666" stroke-width="3"/></svg></button>
            <button aria-label="Zoom"><svg viewBox="0 0 60 60"><path d="M36 36l20 19" stroke="#444" stroke-width="7"/><circle cx="22" cy="22" r="19" fill="#e9f2f2" stroke="#888" stroke-width="3"/><path d="M46 9h13M52 2v14M46 22h13" stroke="#444" stroke-width="3"/></svg></button>
            <button class="wide" aria-label="Fit"><svg viewBox="0 0 60 60"><path d="M2 2h56v55H2z" fill="none" stroke="#999" stroke-width="3" stroke-dasharray="12 6"/><path d="M38 38l18 18" stroke="#444" stroke-width="7"/><circle cx="24" cy="24" r="19" fill="#e9f2f2" stroke="#888" stroke-width="3"/></svg><span class="caret"></span></button>
            <button aria-label="Display Settings"><svg viewBox="0 0 60 60"><path d="M2 2h56v42H2z" fill="#eee" stroke="#666" stroke-width="3"/><path d="M7 7h46v32H7z" fill="#8cb6e6"/><path d="M22 46h16v8h8v5H14v-5h8z" fill="#777"/></svg><span class="caret"></span></button>
            <button aria-label="Grid and Snaps"><svg viewBox="0 0 60 60"><path d="M3 3h54v54H3zM12 3v54M21 3v54M30 3v54M39 3v54M48 3v54M3 12h54M3 21h54M3 30h54M3 39h54M3 48h54" fill="#eee" stroke="#888" stroke-width="2"/><path d="M3 3h54v54H3zM21 3v54M39 3v54M3 21h54M3 39h54" fill="none" stroke="#444" stroke-width="3"/></svg><span class="caret"></span></button>
            <button aria-label="Viewports"><svg viewBox="0 0 60 60"><path d="M2 7h56v47H2z" fill="#9cbce4" stroke="#4f6684" stroke-width="4"/><path d="M30 7v47M2 30h56" stroke="#4f6684" stroke-width="4"/></svg><span class="caret"></span></button>
        </div>
    </main>

    <footer class="timeline">
        <div class="playback">
            <button aria-label="Go to start"><svg viewBox="0 0 16 16"><path d="M1 1h2v14H1zM15 2v12L4 8z"/></svg></button>
            <button aria-label="Step back"><svg viewBox="0 0 16 16"><path d="M12 2v13L0 8zM14 5h2v6h-2z"/></svg></button>
            <button aria-label="Play"><svg class="play" viewBox="0 0 16 18"><path d="M1 0v18l15-9z"/></svg></button>
            <button aria-label="Step forward"><svg viewBox="0 0 16 16"><path d="M4 2v13l12-7zM0 5h2v6H0z"/></svg></button>
            <button aria-label="Go to end"><svg viewBox="0 0 16 16"><path d="M13 1h2v14h-2zM1 2v12l11-6z"/></svg></button>
        </div>
        <ol class="features">
            <li><svg><use href="#t-sketch"/></svg></li>
            <li><svg><use href="#t-body"/></svg></li>
            <li><svg><use href="#extrude"/></svg></li>
            <li><svg><use href="#extrude"/></svg></li>
            <li><svg><use href="#t-body"/></svg></li>
            <li><svg><use href="#t-sketch"/></svg></li>
            <li><svg><use href="#extrude"/></svg></li>
            <li><svg><use href="#extrude"/></svg></li>
            <li><svg><use href="#combine"/></svg></li>
            <li><svg><use href="#t-body"/></svg></li>
            <li><svg><use href="#t-sketch"/></svg></li>
            <li><svg><use href="#extrude"/></svg></li>
            <li><svg><use href="#t-cylinder"/></svg></li>
            <li><svg><use href="#t-body"/></svg></li>
            <li><svg><use href="#t-sketch"/></svg></li>
            <li><svg><use href="#sweep"/></svg></li>
            <li><svg><use href="#t-pipe"/></svg></li>
            <li><svg><use href="#t-plane"/></svg></li>
            <li><svg><use href="#t-sketch"/></svg></li>
            <li><svg><use href="#extrude"/></svg></li>
            <li><svg><use href="#combine"/></svg></li>
            <li><svg><use href="#t-pin"/></svg></li>
            <li><svg><use href="#t-move"/></svg></li>
            <li><svg><use href="#combine"/></svg></li>
            <li><svg><use href="#t-joint"/></svg></li>
            <li><svg><use href="#t-joint"/></svg></li>
            <li><svg><use href="#t-joint"/></svg></li>
        </ol>
        <svg class="marker" viewBox="0 0 15 40" aria-hidden="true"><path d="M0 0h15v5l-5 4v31H6V9L0 5z" fill="#666"/></svg>
        <button class="tool settings" aria-label="Timeline settings"><svg class="i18"><use href="#gear"/></svg></button>
    </footer>
</body>
</html>
```

FILE: styles.css
```css
* {
    box-sizing: border-box;
}
body {
    display: flex;
    flex-direction: column;
    height: 100vh;
    margin: 0;
    overflow: hidden;
    font-family: "Liberation Sans", Arial, sans-serif;
    font-size: 14px;
    color: #333;
    background: #fff;
}
h1, h2, ul, ol {
    margin: 0;
    padding: 0;
    font-weight: normal;
    list-style: none;
}
button {
    padding: 0;
    border: none;
    background: none;
    font: inherit;
    color: inherit;
    cursor: pointer;
}
svg {
    display: block;
    flex: none;
}
a {
    color: inherit;
    text-decoration: none;
}
.sprite {
    position: absolute;
    width: 0;
    height: 0;
}
.tool {
    display: flex;
    align-items: center;
    gap: 5px;
}
.caret {
    border: 5px solid transparent;
    border-top: 6px solid currentColor;
    border-bottom: 0;
}
.i11 { width: 11px; height: 11px; }
.i12 { width: 12px; height: 12px; }
.i16 { width: 16px; height: 16px; }
.i18 { width: 18px; height: 18px; }
.i20 { width: 20px; height: 20px; }

/* title bar */
.titlebar {
    display: flex;
    align-items: center;
    height: 38px;
    padding-left: 4px;
    border-top: 1px solid #35343a;
    background: #f1f3f7;
}
.app-logo {
    width: 18px;
    height: 20px;
}
.logo-letter {
    font-size: 32px;
    font-weight: bold;
    fill: #fff;
    text-anchor: middle;
}
.titlebar h1 {
    flex: 1;
    margin-left: 7px;
    font-family: "Noto Sans", sans-serif;
    font-size: 14px;
    color: #111;
}
.win-button {
    display: grid;
    place-items: center;
    width: 58px;
    height: 36px;
}
.win-button svg {
    width: 12px;
    height: 12px;
    overflow: visible;
    fill: none;
    stroke: #111;
}

/* quick access bar */
.quickbar {
    display: flex;
    align-items: flex-end;
    height: 40px;
    background: #cbcbcb;
}
.quick-tools {
    display: flex;
    align-items: center;
    width: 235px;
    height: 40px;
    padding-left: 5px;
    color: #666;
}
.file { margin-left: 22px; }
.save { margin-left: 23px; }
.undo { margin-left: 23px; }
.redo {
    margin-left: 15px;
    color: #999;
}
.home-tab, .new-tab {
    display: grid;
    place-items: center;
    height: 35px;
    border-radius: 4px 4px 0 0;
    background: #bababa;
}
.home-tab {
    width: 49px;
    padding: 4px 0 0 5px;
}
.doc-tab {
    display: flex;
    flex: 1;
    align-items: center;
    height: 35px;
    margin: 0 5px;
    padding: 2px 8px 0 0;
    border-radius: 4px 4px 0 0;
    background: #f1f1f1;
}
.doc-title {
    display: flex;
    flex: 1;
    align-items: center;
    justify-content: center;
    gap: 7px;
    font-size: 15px;
}
.doc-icon {
    width: 18px;
    height: 20px;
}
.new-tab {
    width: 34px;
}
.account {
    display: flex;
    align-items: center;
    gap: 22px;
    height: 40px;
    margin-left: 4px;
    padding: 0 13px 0 4px;
    border-left: 1px solid #eee;
}
.expiring {
    width: 117px;
    height: 30px;
    margin-right: -8px;
    border-radius: 4px;
    background: #faa21b;
    color: #fff;
}
.avatar {
    width: 32px;
    height: 32px;
    margin-left: 2px;
    border-radius: 50%;
    background: #eee;
}

/* ribbon */
.ribbon {
    display: flex;
    height: 103px;
    border-bottom: 1px solid #ccc;
    background: #f1f1f1;
}
.workspace {
    position: relative;
    width: 138px;
    height: 76px;
    margin: 13px 19px 0 8px;
}
.workspace select {
    width: 100%;
    height: 100%;
    padding-left: 36px;
    border: 1px solid #ccc;
    border-radius: 5px;
    appearance: none;
    background: #f1f1f1;
    font: bold 14px "Liberation Sans", Arial, sans-serif;
    color: #333;
}
.workspace .caret {
    position: absolute;
    top: 36px;
    right: 35px;
    border-width: 6px 4px 0;
}
.ribbon-main {
    flex: 1;
}
.tabs {
    display: flex;
    gap: 27px;
    height: 29px;
    margin-left: 2px;
}
.tabs a {
    padding: 6px 15px 0;
}
.tabs .active {
    padding: 6px 14px 0;
    border-bottom: 4px solid #0696d7;
    color: #0696d7;
}
.groups {
    display: flex;
    margin-top: 4px;
}
.group {
    display: flex;
    flex-direction: column;
    align-items: center;
    justify-content: space-between;
    height: 66px;
    padding: 0 13px;
    border-right: 1px solid #ccc;
}
.group:first-child {
    padding: 0 11px 0 0;
}
.group:last-child {
    border: none;
}
.icons {
    display: flex;
    align-items: center;
    gap: 14px;
    height: 42px;
}
.icons svg {
    width: 40px;
    height: 40px;
}
.icons .selected {
    margin: -3px 0;
    background: #0696d7;
}
.icons .selected svg {
    width: 48px;
    height: 48px;
}
.group-label {
    display: flex;
    align-items: center;
    gap: 2px;
    height: 20px;
    padding: 0 4px;
}
.group-label .caret {
    border-width: 6px 4px 0;
}

/* drawing area */
.canvas {
    position: relative;
    flex: 1;
    overflow: hidden;
    border-top: 3px solid #f1f1f1;
}
.model {
    position: absolute;
    left: 50%;
    bottom: 0;
    width: 400px;
    height: 623px;
    margin-left: -200px;
}
.edge {
    stroke: #000;
    stroke-width: 3;
}
.edge:not([fill]) {
    fill: none;
}
.thin {
    stroke-width: 1;
}
.browser {
    position: relative;
    width: 373px;
    margin-top: 5px;
}
.panel-head {
    display: flex;
    align-items: center;
    width: 373px;
    height: 31px;
    padding: 0 13px 0 30px;
    border: solid #ccc;
    border-width: 1px 1px 2px 0;
    background: #f1f1f1;
}
.panel-head h2 {
    flex: 1;
    font-size: 14px;
    color: #666;
}
.browser .panel-head {
    padding-left: 5px;
}
.collapse svg {
    width: 13px;
    height: 9px;
}
.collapse {
    margin-right: 12px;
}
.tree {
    padding-top: 4px;
}
.tree li {
    display: flex;
    align-items: center;
    height: 30px;
    padding-left: 45px;
}
.toggle {
    width: 22px;
}
.toggle svg {
    width: 8px;
    height: 12px;
    overflow: visible;
}
.chip {
    display: flex;
    align-items: center;
    height: 25px;
    padding-left: 3px;
    background: #f1f1f1;
}
.eye {
    width: 20px;
    height: 14px;
    margin-right: 11px;
}
.folder {
    width: 21px;
    height: 20px;
}
.gear {
    width: 16px;
    height: 16px;
    color: #777;
}
.cube {
    width: 18px;
    height: 18px;
    margin: 0 1px 0 2px;
}
.name {
    display: flex;
    align-items: center;
    height: 25px;
    padding: 0 13px 0 17px;
}
.eye ~ .name {
    margin-left: 7px;
    padding-left: 10px;
}
.eye ~ .picked {
    padding-right: 9px;
    background: #808080;
    color: #fff;
}
.tree .root {
    padding-left: 22px;
}
.root .toggle svg {
    width: 9px;
    height: 9px;
}
.root .chip {
    width: 325px;
    padding-left: 4px;
}
.root .eye {
    margin-right: 7px;
}
.root-name {
    display: flex;
    align-items: center;
    width: 263px;
    height: 20px;
    padding-left: 3px;
    background: #969696;
    color: #fff;
    white-space: nowrap;
}
.root-name b {
    margin-left: 17px;
}
.root input {
    width: 17px;
    height: 17px;
    margin: 0 0 0 5px;
    border: 1px solid #555;
    border-radius: 50%;
    appearance: none;
    background: radial-gradient(circle, #333 3px, #d5dbe8 4px);
}
.comments {
    position: absolute;
    bottom: 6px;
    left: 0;
}
.viewcube {
    position: absolute;
    top: 6px;
    right: 0;
    width: 132px;
    height: 130px;
}
.cube-text {
    font-size: 27px;
    font-weight: bold;
    fill: #999;
    text-anchor: middle;
}
.axis-z, .axis-x {
    font-size: 40px;
    text-anchor: middle;
    fill: #8686f5;
}
.axis-x {
    fill: #f58080;
}
.navbar {
    position: absolute;
    bottom: 9px;
    left: 50%;
    display: flex;
    align-items: center;
    justify-content: space-between;
    width: 296px;
    height: 30px;
    margin-left: -149px;
    padding: 0 6px 0 4px;
    background: #f1f1f1;
}
.navbar button {
    display: flex;
    align-items: center;
    gap: 3px;
}
.navbar .wide {
    gap: 7px;
}
.navbar svg {
    width: 19px;
    height: 19px;
}
.navbar .caret {
    border-width: 6px 3px 0;
}

/* timeline */
.timeline {
    display: flex;
    align-items: flex-start;
    height: 55px;
    border-top: 1px solid #d5d5d8;
    background: #f1f1f1;
}
.playback {
    display: flex;
    gap: 15px;
    align-items: center;
    width: 172px;
    height: 60px;
    padding-left: 7px;
}
.playback svg {
    width: 16px;
    height: 16px;
    fill: #666;
}
.playback .play {
    height: 18px;
}
.features {
    display: flex;
    margin-top: 19px;
}
.features li {
    position: relative;
    width: 30px;
    height: 34px;
    padding-left: 5px;
    border-bottom: 3px solid #ccc;
}
.features li::after {
    content: "";
    position: absolute;
    left: 14px;
    bottom: 0;
    width: 3px;
    height: 6px;
    background: #ccc;
}
.features li:first-child {
    border-image: linear-gradient(to right, transparent 14px, #ccc 14px) 3;
}
.features li:last-child {
    border-image: linear-gradient(to right, #ccc 17px, transparent 17px) 3;
}
.features svg {
    width: 20px;
    height: 20px;
}
.marker {
    width: 15px;
    height: 40px;
    margin: 13px 0 0 -8px;
}
.settings {
    margin: 20px 15px 0 auto;
    color: #666;
}
```
